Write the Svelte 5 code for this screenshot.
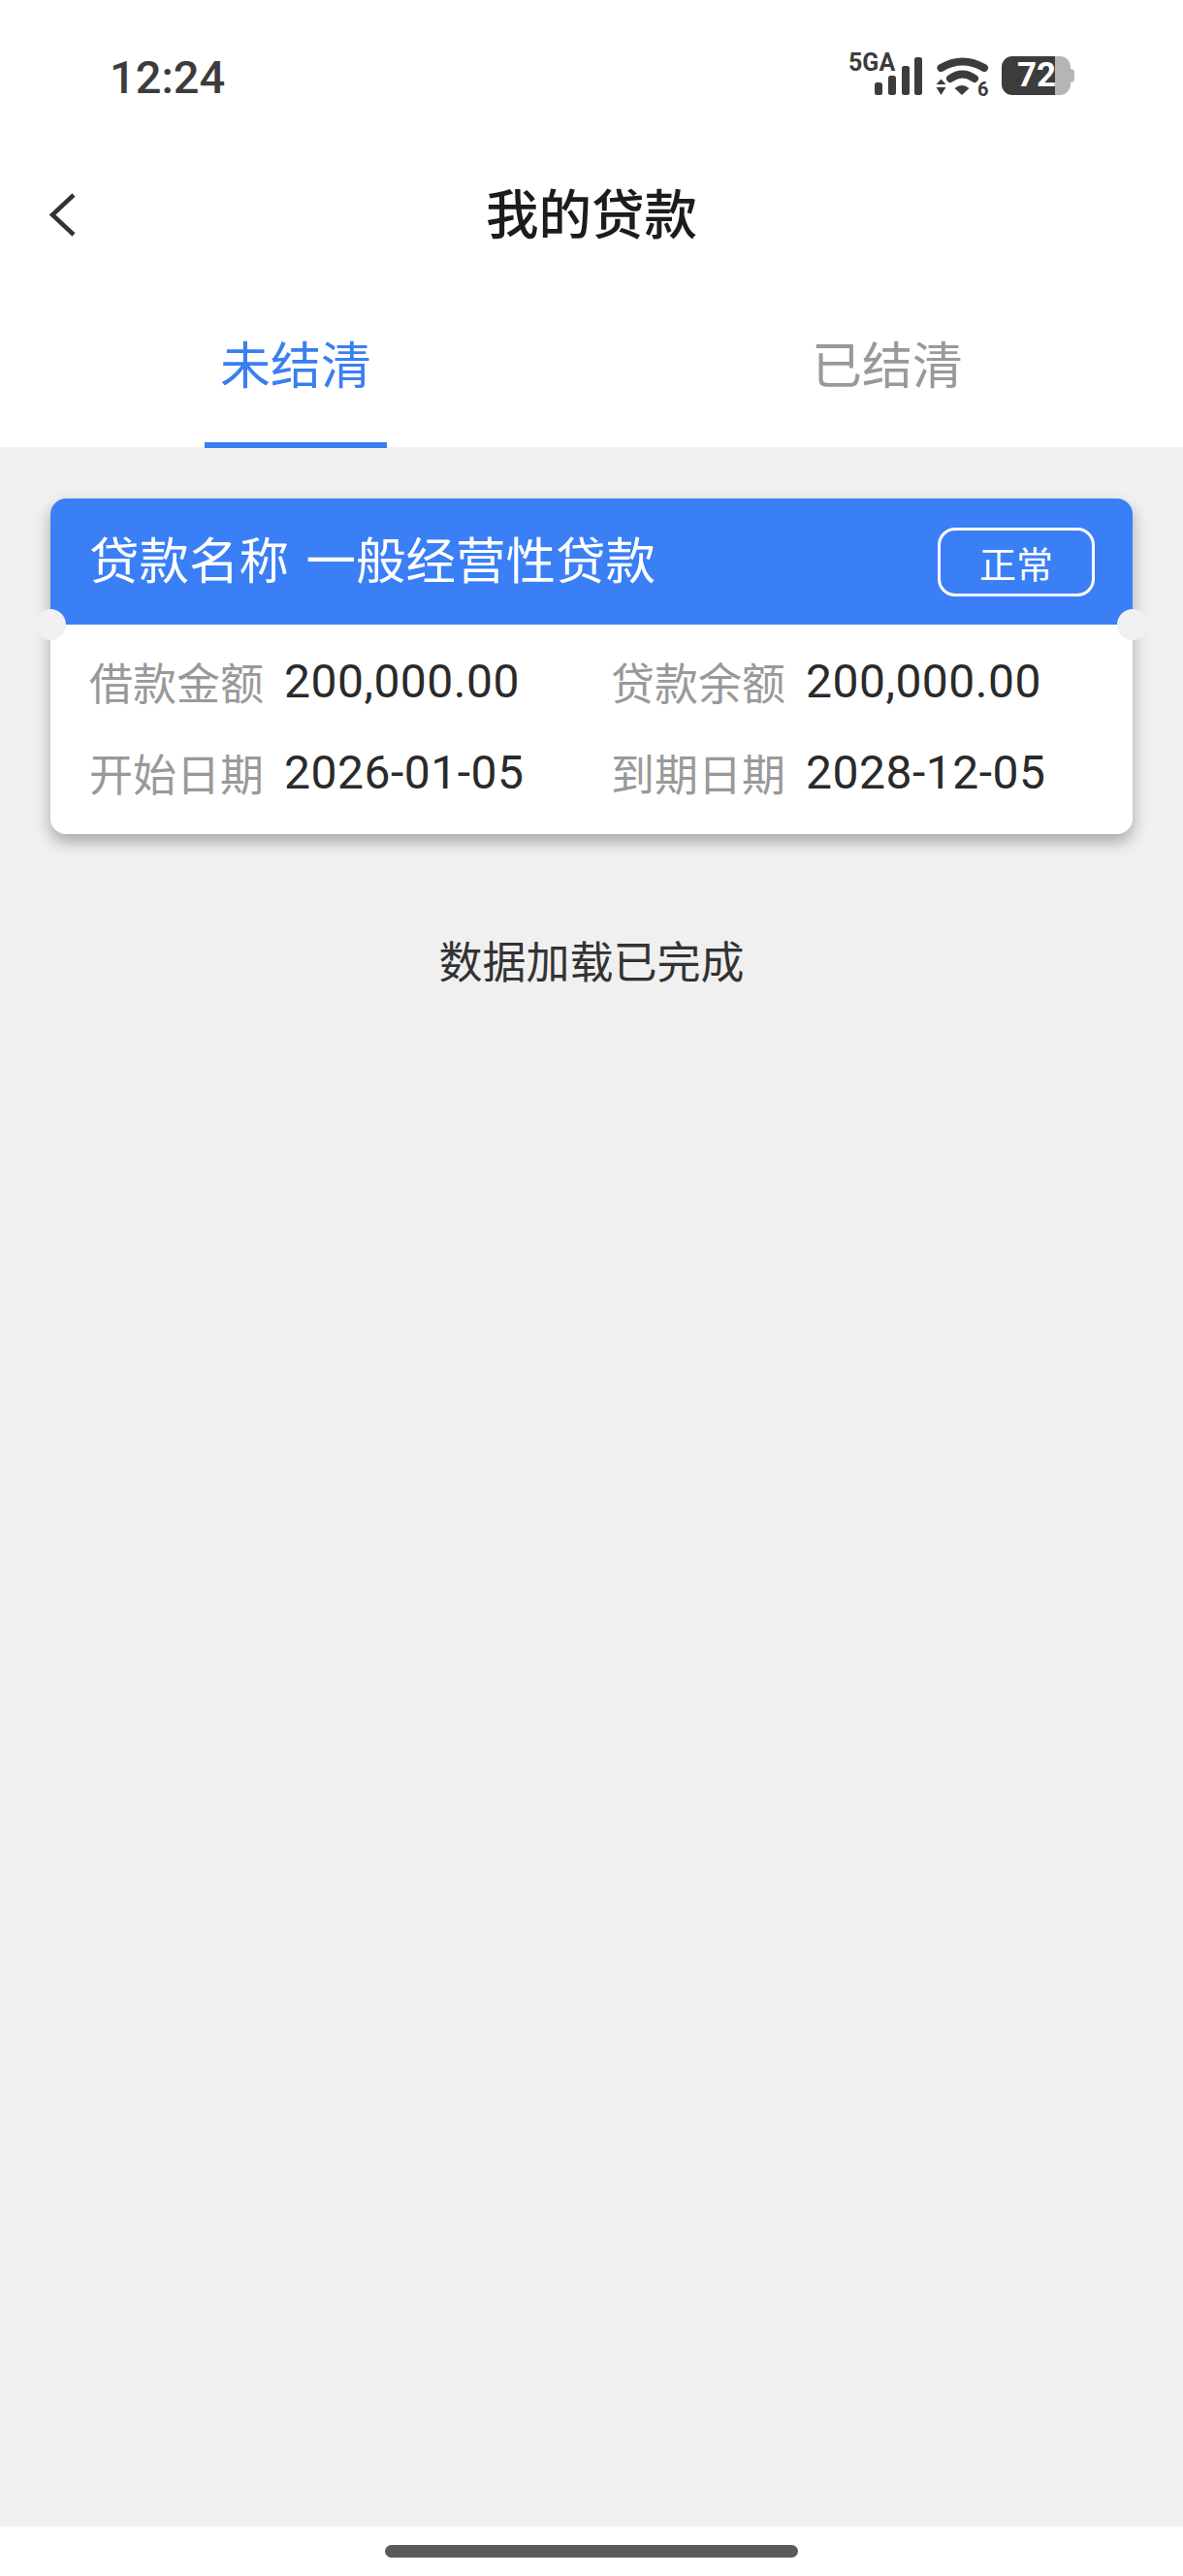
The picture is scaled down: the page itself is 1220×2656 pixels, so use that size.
<script>
  const rows = [
    [['借款金额', '200,000.00'], ['贷款余额', '200,000.00']],
    [['开始日期', '2026-01-05'], ['到期日期', '2028-12-05']]
  ];
</script>

<div class="page">
  <div class="statusbar">
    <span class="time">12:24</span>
    <div class="status-icons">
      <svg width="78" height="52" viewBox="0 -8 78 52" class="signal">
        <text x="0" y="16" class="net">5GA</text>
        <rect x="27" y="28" width="8" height="13" rx="2.5" />
        <rect x="41" y="21" width="8" height="20" rx="2.5" />
        <rect x="55" y="11" width="8" height="30" rx="2.5" />
        <rect x="68" y="2" width="8" height="39" rx="2.5" />
      </svg>
      <svg width="56" height="50" viewBox="0 0 56 50" class="wifi">
        <path d="M5.5 13 Q27.5 0 50 13" />
        <path d="M15 24 Q27.5 15 40 24" />
        <path d="M19.5 34 Q27 28 34.5 34 L27 41 Z" class="solid" />
        <path d="M0.5 30 L5.5 24.5 L10.5 30 Z M0.5 33 L10.5 33 L5.5 41 Z" class="solid" />
        <text x="43" y="42" class="six">6</text>
      </svg>
      <div class="battery">
        <div class="battery-body"><span>72</span></div>
        <div class="battery-cap"></div>
      </div>
    </div>
  </div>

  <header class="navbar">
    <svg class="back" width="30" height="52" viewBox="0 0 30 52">
      <path d="M26 5 L4 25.5 L26 46" />
    </svg>
    <h1>我的贷款</h1>
  </header>

  <nav class="tabs">
    <div class="tab active"><span>未结清</span></div>
    <div class="tab"><span>已结清</span></div>
  </nav>

  <main class="content">
    <section class="card">
      <div class="card-head">
        <span class="card-title">贷款名称 一般经营性贷款</span>
        <span class="badge">正常</span>
      </div>
      <div class="card-body">
        {#each rows as row}
          <div class="row">
            {#each row as [label, value]}
              <div class="cell">
                <span class="label">{label}</span>
                <span class="value">{value}</span>
              </div>
            {/each}
          </div>
        {/each}
      </div>
      <i class="notch left"></i>
      <i class="notch right"></i>
    </section>
    <p class="finished">数据加载已完成</p>
  </main>

  <div class="homebar"><div class="indicator"></div></div>
</div>

<style>
  :global(body) {
    margin: 0;
    background: #fff;
  }

  .page {
    width: 1220px;
    height: 2656px;
    display: flex;
    flex-direction: column;
    font-family: "Noto Sans CJK SC", "Noto Sans", sans-serif;
    overflow: hidden;
  }

  .statusbar {
    height: 160px;
    flex: none;
    display: flex;
    justify-content: space-between;
    align-items: flex-start;
    padding: 50px 112px 0 113px;
    box-sizing: border-box;
  }

  .time {
    font-family: Roboto, sans-serif;
    font-size: 47px;
    font-weight: 500;
    line-height: 60px;
    color: #3c3c3c;
  }

  .status-icons {
    display: flex;
    align-items: flex-start;
    gap: 12px;
    margin-top: 7px;
  }

  .signal {
    fill: #3c3c3c;
    margin-top: -8px;
  }

  .net {
    font-family: Roboto, sans-serif;
    font-size: 25px;
    font-weight: 700;
    fill: #3c3c3c;
  }

  .wifi path {
    fill: none;
    stroke: #3c3c3c;
    stroke-width: 8;
    stroke-linecap: round;
  }

  .wifi path.solid {
    fill: #3c3c3c;
    stroke: none;
  }

  .six {
    font-family: Roboto, sans-serif;
    font-size: 20px;
    font-weight: 700;
    fill: #3c3c3c;
  }

  .battery {
    display: flex;
    align-items: center;
    height: 40px;
    margin-top: 1px;
  }

  .battery-body {
    width: 71px;
    height: 40px;
    border-radius: 11px;
    background: linear-gradient(90deg, #3c3c3c 0 77%, #b5b5b5 77%);
    display: flex;
    align-items: center;
    padding-left: 16px;
    box-sizing: border-box;
  }

  .battery-body span {
    font-family: Roboto, sans-serif;
    font-size: 35px;
    font-weight: 700;
    color: #fff;
    line-height: 40px;
  }

  .battery-cap {
    width: 4px;
    height: 14px;
    border-radius: 0 4px 4px 0;
    background: #b5b5b5;
  }

  .navbar {
    height: 124px;
    flex: none;
    display: flex;
    align-items: center;
    justify-content: center;
    position: relative;
  }

  .navbar h1 {
    margin: 0 0 10px;
    font-size: 54.5px;
    font-weight: 500;
    color: #1c1c1c;
  }

  .back {
    position: absolute;
    left: 50px;
    top: 36px;
  }

  .back path {
    fill: none;
    stroke: #333;
    stroke-width: 4.5;
  }

  .tabs {
    height: 177px;
    flex: none;
    display: flex;
  }

  .tab {
    flex: 1;
    display: flex;
    justify-content: center;
  }

  .tab span {
    position: relative;
    width: 188px;
    height: 178px;
    box-sizing: border-box;
    text-align: center;
    font-size: 52px;
    line-height: 180px;
    color: #999;
  }

  .tab.active span {
    color: #3a7ff0;
    border-bottom: 6px solid #3a7ff0;
  }

  .content {
    flex: 1;
    background: #f0f0f0;
    padding: 53px 52px 0;
  }

  .card {
    position: relative;
    border-radius: 16px;
    background: #fff;
    box-shadow: 0 8px 16px rgba(0, 0, 0, 0.3);
  }

  .card-head {
    height: 130px;
    box-sizing: border-box;
    padding: 0 39px 0 40px;
    display: flex;
    align-items: center;
    justify-content: space-between;
    background: #3a7ff6;
    border-radius: 16px 16px 0 0;
  }

  .card-title {
    font-size: 51.5px;
    word-spacing: 6px;
    color: #fff;
    white-space: pre;
    margin-bottom: 10px;
  }

  .badge {
    width: 162px;
    height: 71px;
    box-sizing: border-box;
    border: 3px solid #fff;
    border-radius: 18px;
    color: #fff;
    font-size: 38px;
    line-height: 65px;
    text-align: center;
  }

  .card-body {
    padding: 11px 40px 0;
    height: 216px;
    box-sizing: border-box;
  }

  .row {
    display: flex;
    height: 94px;
  }

  .cell {
    flex: none;
    width: 538px;
    display: flex;
    align-items: center;
    gap: 21px;
  }

  .label {
    font-size: 45px;
    color: #999;
  }

  .value {
    font-family: Roboto, sans-serif;
    font-size: 48px;
    letter-spacing: 0.5px;
    color: #2a2a2a;
  }

  .notch {
    position: absolute;
    top: 114px;
    width: 32px;
    height: 32px;
    border-radius: 50%;
    background: #f0f0f0;
  }

  .notch.left { left: -16px; }
  .notch.right { right: -16px; }

  .finished {
    margin: 97px 0 0;
    text-align: center;
    font-size: 45px;
    color: #333;
  }

  .homebar {
    height: 51px;
    flex: none;
    background: #fff;
    display: flex;
    justify-content: center;
    padding-top: 19px;
    box-sizing: border-box;
  }

  .indicator {
    width: 426px;
    height: 13px;
    border-radius: 7px;
    background: #5a5a5a;
  }
</style>
